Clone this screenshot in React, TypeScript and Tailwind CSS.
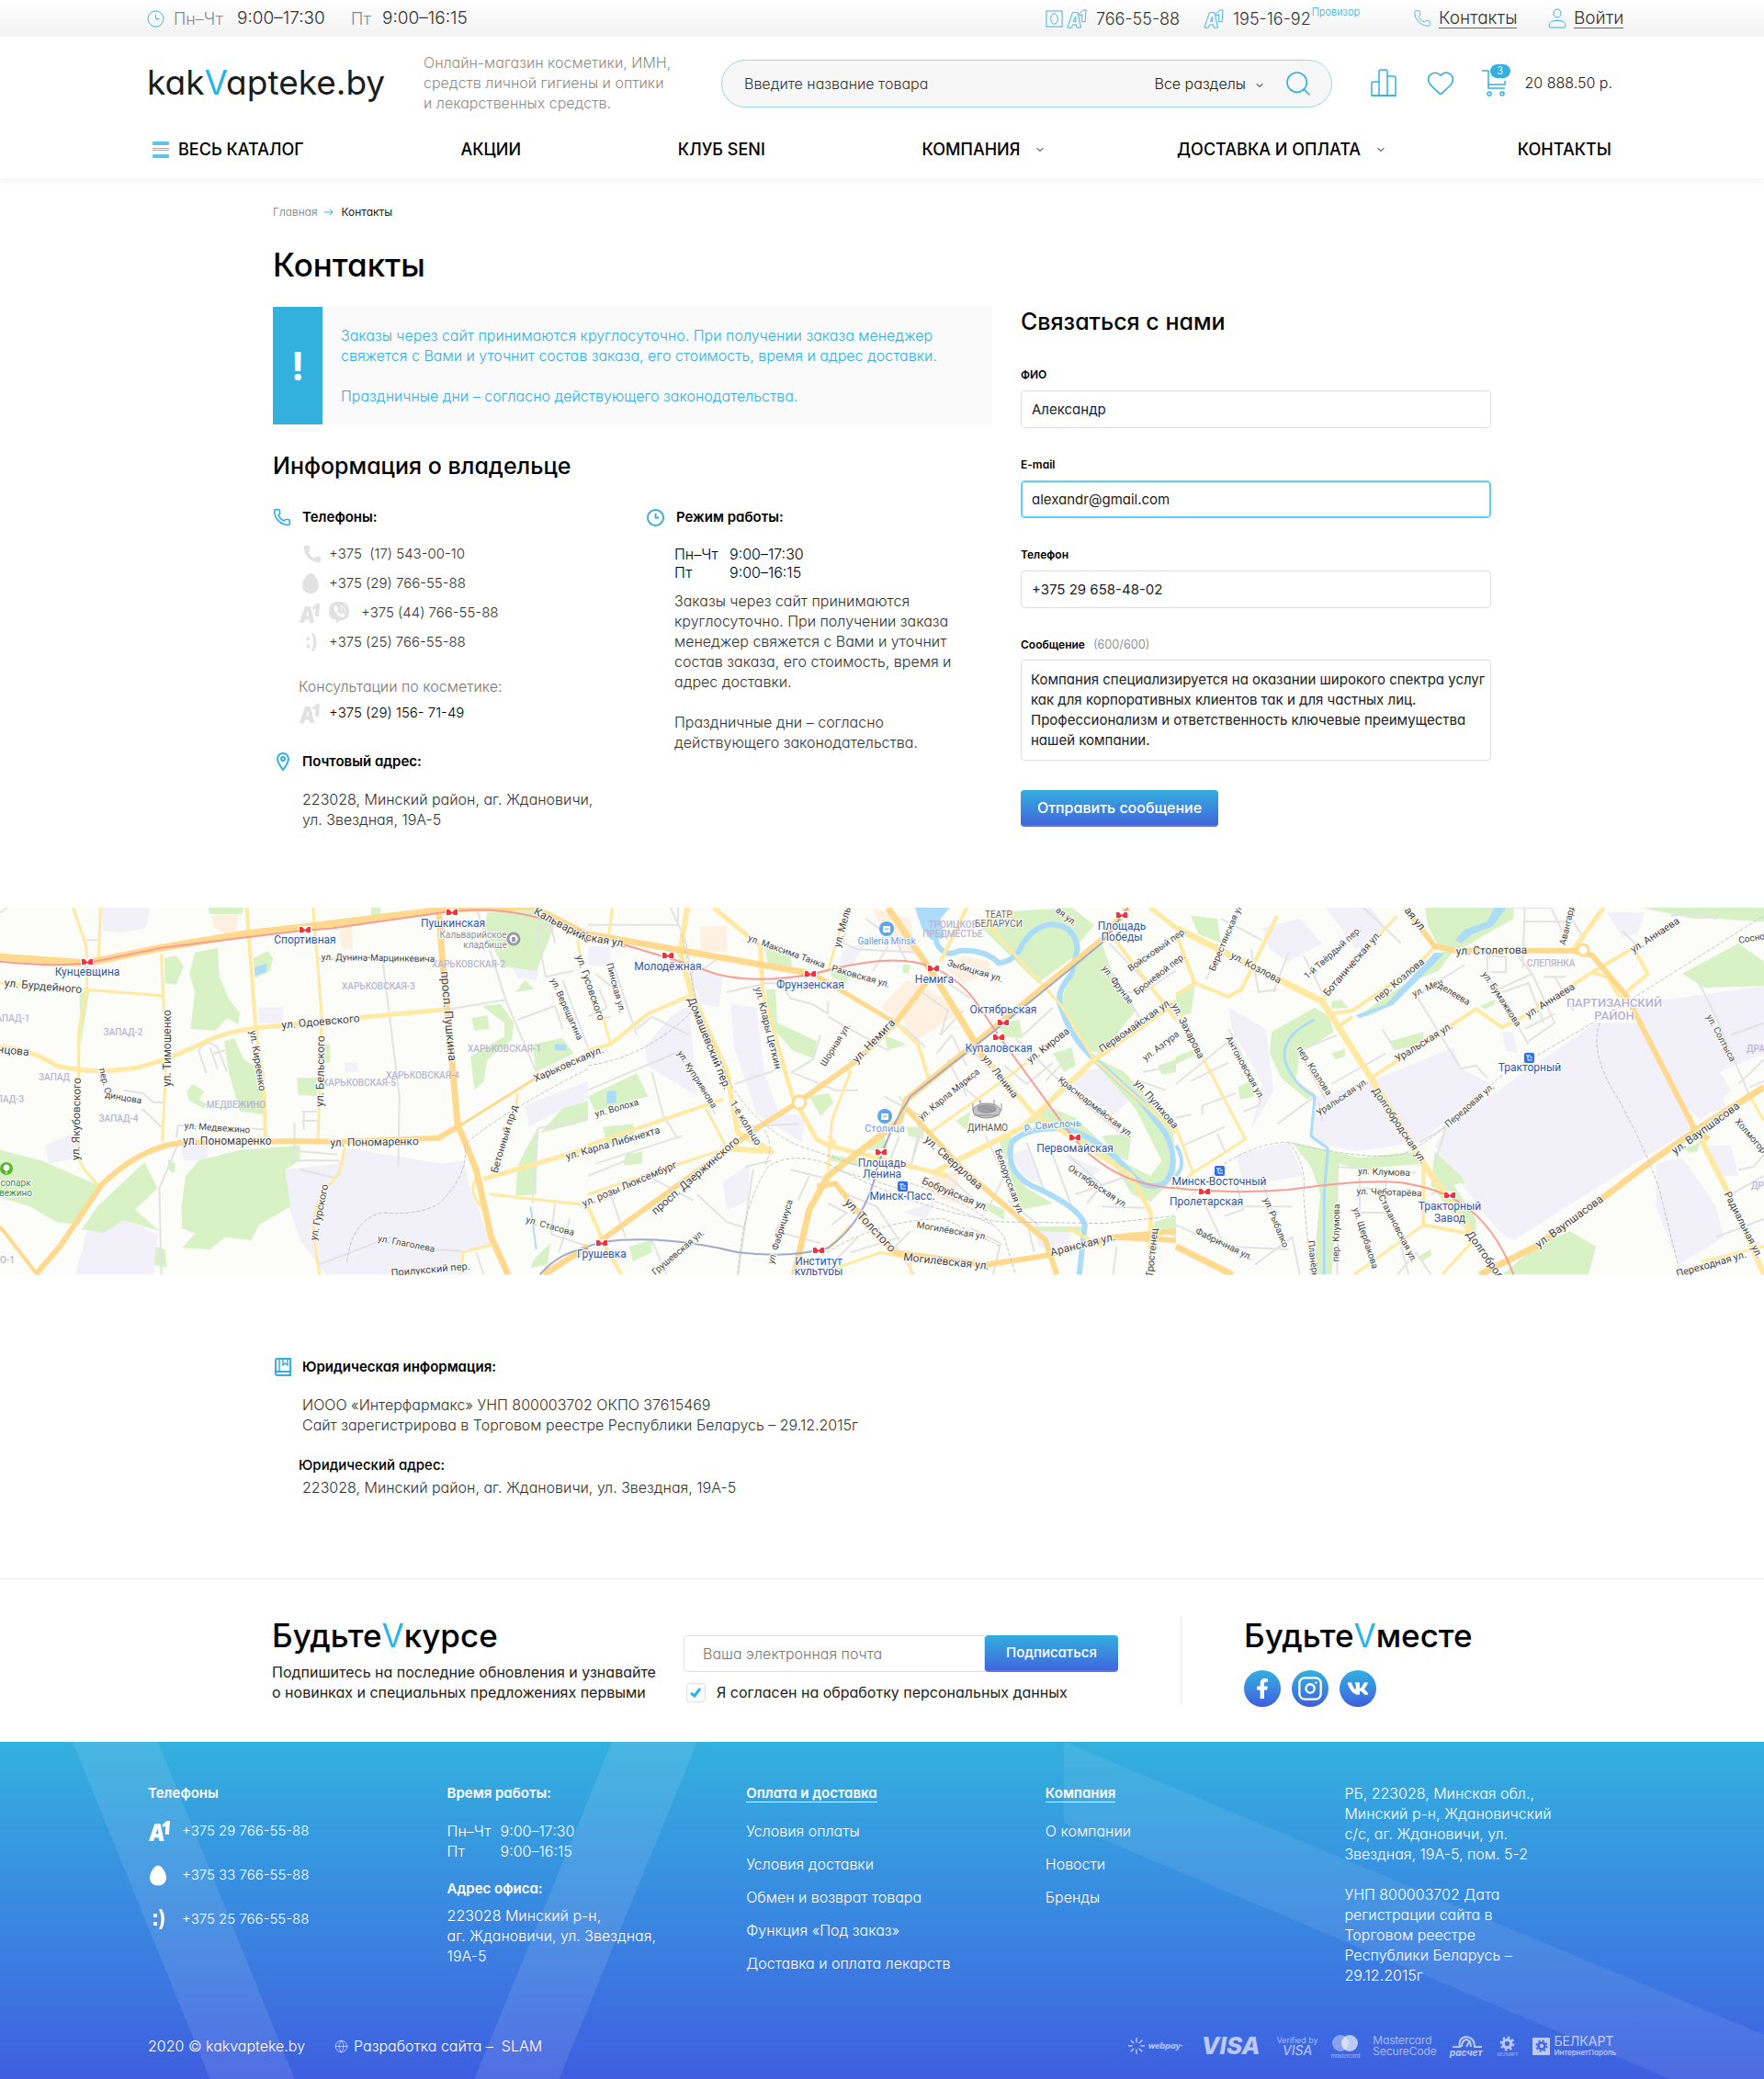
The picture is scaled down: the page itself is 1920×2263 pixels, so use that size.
import type { ReactNode } from 'react'
import { ChevronDown, Globe, Heart, Instagram, Phone, Search } from 'lucide-react'
import { FaFacebookF, FaVk } from 'react-icons/fa'

type Road = [d: string, width: number]
type Street = [x1: number, y1: number, x2: number, y2: number, text: string, size: number]
type Mark = [x: number, y: number, text: string]

type Tile = {
    green: string[]
    works: string[]
    peach: string[]
    lake: string[]
    river: Road[]
    grey: string[]
    yellow: Road[]
    orange: Road[]
    rail: string[]
    red: string[]
    blue: string[]
    streets: Street[]
    districts: Mark[]
    stations: Mark[]
    metro: [number, number][]
    trains: [number, number][]
    malls: [number, number][]
}

// every tile covers 640x400 px, its own grid is 1568x1200 and starts at y = 24
const tiles: Tile[] = [
    {
        green: [
            'M438 190L470 180L490 215L470 275L440 270Z',
            'M520 170L580 155L585 250L610 320L640 370L635 405L605 385L575 425L508 420L520 300L505 240Z',
            'M675 190L715 165L728 190L720 230L680 255Z',
            'M212 300L238 300L215 470Z',
            'M598 460L625 450L650 520L705 560L708 700L640 690L610 560Z',
            'M497 625L515 600L545 625L530 650L552 665L545 680L505 655Z',
            'M792 580L845 580L845 640L795 635Z',
            'M865 470L880 470L880 530L862 530Z',
            'M0 815L110 850L270 935L210 1060L150 1050L80 1000L0 970Z',
            'M385 855L420 940L360 1010L425 1080L330 1045L275 1085L218 1075L260 1000Z',
            'M530 850L640 815L800 800L800 850L760 880L775 1000L690 1060L670 1110L600 1100L560 1140L485 1135L520 1090L485 1070L484 1000L495 900Z',
            'M555 24L650 24L645 45L560 45Z',
            'M1300 40L1425 24L1480 80L1430 230L1340 215L1290 90Z',
            'M1375 300L1400 260L1425 290Z',
            'M1420 470L1500 450L1530 500L1430 560Z',
            'M1258 385L1300 375L1305 420L1265 425Z',
            'M1285 345L1335 338L1370 400L1365 455L1300 520L1290 590L1265 620L1255 510L1345 445L1345 400Z',
            'M1500 680L1568 655L1568 720L1440 760Z',
            'M1400 820L1435 740L1430 960L1375 965L1380 870Z',
            'M415 1130L440 1140L445 1200L412 1190Z',
            'M1425 1170L1468 1120L1460 1190L1415 1200Z',
            'M448 845L468 860L465 890L450 880Z',
            'M990 24L1015 24L1015 58L990 58Z',
        ],
        works: [
            'M270 24L400 24L390 90L330 105L275 100Z',
            'M755 880L900 860L930 810L1180 860L1240 850L1250 930L1310 1120L1230 1150L1250 1222L870 1222L800 1110L770 1000Z',
            'M120 800L200 760L210 840L130 860Z',
            'M1400 670L1568 590L1568 650L1470 700L1410 740Z',
            'M230 1080L330 1040L420 1090L410 1222L200 1222L220 1140Z',
            'M690 350L755 350L755 400L690 400Z',
            'M480 790L560 790L550 850L490 850Z',
            'M920 530L955 530L955 560L920 560Z',
            'M1365 215L1440 205L1430 260L1380 255Z',
        ],
        peach: ['M565 50L635 45L630 130L570 90Z', 'M905 90L940 85L940 160L910 155Z'],
        lake: ['M678 220L712 205L710 235L680 245Z', 'M1480 470L1510 470L1510 490L1480 490Z'],
        river: [['M1415 1000L1430 1140', 2]],
        grey: [
            'M1020 190L1065 640L1062 870', 'M1270 24L1350 330L1430 560', 'M1200 355L1350 325', 'M330 620L380 630L410 660L435 660',
            'M378 680L435 745', 'M470 775L475 735L705 748', 'M785 725L785 850L905 850', 'M800 880L890 905', 'M800 820L900 830',
            'M1430 90L1455 250L1530 230', 'M1500 260L1568 480', 'M1380 390L1480 345L1500 420', 'M550 565L530 490Q550 450 580 480L605 560',
            'M480 780L425 940L430 1222', 'M850 1190L1040 1100L1150 1140L1230 1145', 'M1435 745L1568 710', 'M1435 745L1420 990',
            'M1480 990L1470 1090L1568 1130', 'M1520 1040L1490 1150', 'M0 40L20 24', 'M850 190L1160 190', 'M805 690L845 690M805 720L845 720M810 690L810 750',
            'M1430 90L1470 85L1480 140', 'M1270 1150L1290 1222', 'M230 130L262 130', 'M560 480L580 550', 'M570 500L600 490',
        ],
        yellow: [
            ['M195 24L230 150L232 290L210 420L208 840L225 880L265 935', 3],
            ['M268 24L263 190', 3],
            ['M430 175L443 520L433 790', 3],
            ['M658 24L682 420L705 640L708 780', 4],
            ['M835 24L858 380L848 780', 3],
            ['M0 270L230 292L438 312', 3],
            ['M0 478Q90 490 150 540Q250 570 370 545Q450 520 560 455Q620 420 760 408L1000 378L1200 355', 5],
            ['M920 805L905 890L870 940Q830 1000 838 1110L852 1222', 3],
            ['M1290 910L1568 810', 5],
            ['M1305 960L1568 995', 3],
            ['M1380 630L1375 690L1315 900', 3],
            ['M1230 1222L1235 1150L1310 1125', 3],
            ['M1270 910Q1245 950 1290 1010', 3],
            ['M1540 130L1550 200', 3],
        ],
        orange: [
            ['M0 185L230 205L430 155L640 112L830 85L1090 45L1200 28L1430 18', 8],
            ['M1170 24L1180 200L1205 520L1220 730L1270 880L1310 1100L1355 1222', 7],
            ['M95 1222L160 1130L270 930Q370 810 480 792L780 786L900 788L1170 776L1220 740', 6],
            ['M1220 740L1430 580L1568 500', 3],
            ['M0 1065L95 1215', 4],
            ['M1450 1222L1568 1130', 7],
            ['M1430 24L1568 110', 5],
        ],
        rail: ['M925 1180Q940 1040 1020 1020Q1120 1030 1170 990Q1250 900 1240 800Q1300 720 1568 550'],
        red: ['M0 200Q150 218 233 205L430 155L810 98L880 92L1205 35Q1350 20 1470 70L1568 108'],
        blue: ['M1440 1222Q1490 1150 1568 1135'],
        streets: [
            [25, 270, 207, 290, 'ул. Бурдейного', 12],
            [0, 487, 70, 495, 'нцова', 12],
            [445, 592, 445, 375, 'ул. Тимошенко', 12],
            [675, 430, 700, 618, 'ул. Киреенко', 11],
            [853, 657, 856, 458, 'ул. Бельского', 12],
            [765, 405, 945, 387, 'ул. Одоевского', 12],
            [873, 182, 1143, 190, 'ул. Дунина-Марцинкевича', 10],
            [1187, 240, 1205, 517, 'просп. Пушкина', 13],
            [200, 832, 206, 597, 'ул. Якубовского', 12],
            [275, 555, 290, 625, 'пер. О', 10],
            [290, 632, 370, 650, 'динцова', 10],
            [500, 735, 660, 747, 'ул. Медвежино', 10],
            [490, 787, 723, 785, 'ул. Пономаренко', 12],
            [883, 793, 1115, 787, 'ул. Пономаренко', 12],
            [835, 1103, 865, 932, 'ул. Гурского', 11],
            [1018, 1103, 1150, 1133, 'ул. Глаголева', 10],
            [1052, 1215, 1245, 1195, 'Прилукский пер.', 11],
            [1318, 880, 1370, 678, 'Бетонный пр-д', 11],
            [1430, 580, 1568, 503, 'Харьковская', 11],
            [1480, 262, 1545, 447, 'ул. Верещагина', 10],
            [1430, 35, 1568, 125, 'Кальварийс', 12],
            [1415, 1045, 1520, 1080, 'ул. Стасова', 10],
        ],
        districts: [
            [35, 385, 'АПАД-1'], [328, 428, 'ЗАПАД-2'], [145, 577, 'ЗАПАД'], [28, 649, 'ПАД-3'], [315, 711, 'ЗАПАД-4'],
            [1010, 280, 'ХАРЬКОВСКАЯ-3'], [1250, 206, 'ХАРЬКОВСКАЯ-2'], [1345, 482, 'ХАРЬКОВСКАЯ-1'], [1128, 569, 'ХАРЬКОВСКАЯ-4'],
            [957, 594, 'ХАРЬКОВСКАЯ-5'], [630, 667, 'МЕДВЕЖИНО'], [20, 1173, 'О-1'],
        ],
        stations: [[233, 235, 'Кунцевщина'], [814, 130, 'Спортивная'], [1207, 75, 'Пушкинская']],
        metro: [[233, 201], [814, 96], [1206, 40]],
        trains: [],
        malls: [],
    },
    {
        green: [
            'M470 150L540 180L545 215L480 210Z',
            'M475 290L500 290L505 400L610 460L600 515L545 490L480 400Z',
            'M1050 90L1080 40L1290 24L1350 80L1310 140L1300 180L1200 270Z',
            'M1310 180L1370 140L1400 240L1460 360L1370 500L1330 490L1260 330Z',
            'M1330 500L1430 560L1560 740L1568 900L1500 985L1450 960L1400 860L1330 800L1240 735L1170 725L1220 670L1300 710L1420 850L1500 900L1530 850L1460 680Z',
            'M1095 780L1130 770L1115 850L1170 940L1240 990L1200 1000L1155 1010Z',
            'M0 640L130 565L160 640L20 690Z',
            'M40 740L120 730L130 780L50 800Z',
            'M100 830L145 820L145 860L95 865Z',
            'M590 640L640 630L655 660L620 705Z',
            'M790 440L850 470L800 490Z',
            'M740 800L790 770L800 820L750 815Z',
            'M850 740L895 740L895 780L855 770Z',
            'M650 830L730 850L730 870L645 850Z',
            'M980 720L1020 690L1010 750Z',
            'M1060 985L1110 1010L1110 1045L1065 1010Z',
            'M1190 1065L1330 1065L1310 1085L1200 1080Z',
            'M1510 1050L1568 1030L1568 1100L1510 1080Z',
            'M110 1130L170 1110L170 1150L120 1180Z',
            'M1240 500L1290 480L1300 540L1270 560Z',
            'M1090 400L1150 390L1160 450L1110 445Z',
            'M645 225L700 225L690 270L650 250Z',
            'M840 210L860 210L855 240L838 235Z',
            'M1520 540L1568 520L1568 560L1530 570Z',
            'M1370 770L1450 760L1440 850L1400 830Z',
        ],
        works: [
            'M380 340L450 350L470 560L510 700L580 700L570 790L450 700L390 480Z',
            'M0 150L60 150L60 220L0 210Z',
            'M150 480L220 380L270 340L290 640L160 540Z',
            'M360 920L430 860L430 980L370 1010Z',
            'M1310 560L1400 540L1460 640L1400 700L1290 600Z',
            'M270 210L360 250L350 350L300 340Z',
            'M1270 830L1370 880L1330 910Z',
            'M840 1020L930 980L900 1040Z',
            'M1190 1060L1290 1090L1270 1150L1200 1130Z',
            'M680 160L740 140L700 220L670 210Z',
            'M1130 830L1170 810L1210 930L1160 900Z',
        ],
        peach: [
            'M300 85L370 85L370 170L300 165Z', 'M760 24L860 60L870 180L790 130Z', 'M820 350L880 270L1000 360L870 460Z',
            'M960 230L1000 180L1070 200L1070 240L1000 270Z', 'M910 900L990 880L980 990L910 960Z', 'M780 350L850 260L880 280L820 390Z',
        ],
        lake: ['M872 24L965 24L940 60L950 120L915 130L890 90Z', 'M50 625L75 620L75 660L50 665Z'],
        river: [
            ['M920 90L930 140Q950 190 990 165Q1060 160 1095 205Q1140 200 1160 140Q1200 70 1250 80Q1300 90 1305 160L1290 240Q1240 310 1265 360Q1290 460 1370 540L1470 650L1540 760Q1580 860 1540 920Q1490 960 1440 880Q1350 760 1260 745Q1170 740 1130 790Q1110 880 1180 930Q1310 1000 1325 1060L1310 1222', 6],
        ],
        grey: [
            'M220 24L260 130L290 340', 'M370 300L480 270L600 280', 'M360 180L300 230', 'M500 250L540 320L600 340L640 370L640 330',
            'M640 380L800 490', 'M620 440L600 520L545 560', 'M390 600L500 555', 'M540 560L660 620L720 620', 'M400 740L560 730',
            'M130 420L170 380L270 440', 'M0 620L250 490L340 700', 'M70 220L130 440', 'M20 240L60 280M20 390L60 380', 'M170 560L200 700L240 780',
            'M20 860L250 770', 'M40 980L160 900L280 980', 'M60 960L100 1100', 'M290 960L370 1050L420 1070', 'M440 880L400 1222', 'M540 990L500 1080L620 1120',
            'M420 870L490 850', 'M690 960L770 1000L830 1110', 'M640 990L690 1020L650 1060', 'M860 870L890 750L830 640', 'M790 640L880 700L900 720',
            'M960 520L1010 640', 'M930 500L970 440L1010 540', 'M1000 360L940 440', 'M1020 320L960 270', 'M890 300L960 360L940 440', 'M840 410L900 480',
            'M1140 450L1300 640L1440 780', 'M1160 440L1240 350', 'M1240 530L1170 600L1110 540', 'M1220 590L1290 500', 'M1010 480L1060 530', 'M990 600L1050 660',
            'M830 770L790 900', 'M880 760L860 880', 'M1060 770L1110 900L1070 1000', 'M960 900L1060 1010', 'M1170 790L1220 960', 'M1230 800L1290 1000',
            'M1280 830L1370 930L1330 990', 'M1300 960L1440 900', 'M1370 1000L1500 1005', 'M1480 560L1568 540', 'M1470 590L1540 620',
            'M1400 240L1470 380', 'M1390 140L1568 370', 'M1480 300L1568 230', 'M1440 220L1568 110', 'M1410 300L1480 300', 'M700 24L680 140L720 160L880 170',
            'M740 60L820 130L850 200', 'M800 150L760 230', 'M1250 24L1310 100', 'M30 290L50 350L0 380', 'M860 1080L820 1130L870 1222', 'M720 1100L640 1200',
            'M1020 1070L1100 1120L1080 1222', 'M1400 1222L1410 1130', 'M1200 1060L1120 980', 'M170 1110L210 1222', 'M300 1090L190 1222', 'M100 850L0 900',
            'M540 880L640 910', 'M590 900L560 980', 'M1170 1050L1190 1150', 'M240 24L240 80L0 80', 'M700 1150L830 1100',
        ],
        yellow: [
            ['M265 24L245 170L275 300L370 560L400 760L490 820L360 810', 6],
            ['M335 24L460 150L465 300L545 640L610 780L640 800L960 900', 5],
            ['M600 240L640 230L690 24', 3],
            ['M820 400L880 470L910 590', 4],
            ['M1010 24L940 200', 4],
            ['M1050 60L1260 340L1350 520L1568 760', 3],
            ['M910 760L1060 630L1170 530', 3],
            ['M920 890L1160 740L1350 520L1568 330', 6],
            ['M1050 500L1190 700L1300 780L1450 900L1500 1020L1500 1222', 5],
            ['M640 880L650 720L700 560L690 545', 3],
            ['M275 310L160 370L60 470L0 490', 4],
            ['M360 650L0 800', 4],
            ['M370 810L220 870L0 960', 3],
            ['M315 680L370 810', 3],
            ['M860 1222L860 1170L780 1150L640 1210', 3],
            ['M1400 120L1568 390', 4],
            ['M1500 24L1568 90', 5],
            ['M65 24L55 120', 3],
            ['M40 380L60 470', 3],
            ['M0 1000L50 1140L90 1222', 4],
            ['M640 770L660 790L640 810', 3],
            ['M700 1060L640 1140', 3],
            ['M1280 1070L1370 1130', 4],
            ['M1090 100L1050 60', 3],
        ],
        orange: [
            ['M0 110L600 240', 7],
            ['M600 240L820 400', 5],
            ['M800 24L920 240L1050 500L1070 540', 7],
            ['M920 240L820 400L720 520L560 660L450 745L30 1115', 6],
            ['M1440 24L1370 130L1100 400L850 650L830 720L640 900L590 1010L550 1222', 7],
            ['M850 680L1000 880L1220 1110L1250 1222', 6],
            ['M610 935L660 925L780 1110L820 1150L1060 1190L1220 1160L1400 1100L1568 1080', 6],
            ['M1400 1100L1568 1110', 6],
        ],
        rail: [
            'M250 110L290 340L380 600Q450 740 560 800Q750 880 900 940Q1060 1010 1110 1100L1140 1222',
            'M400 1222Q410 1000 480 870Q540 820 640 860Q870 1010 1100 1050L1380 1055L1568 1030',
            'M600 1180Q760 1040 950 1040L1100 1130',
            'M0 540Q160 510 280 360',
            'M470 750Q500 800 470 870',
            'M660 880Q900 960 1080 1060',
        ],
        red: ['M95 145Q250 200 340 240Q450 275 600 240L650 225Q830 170 920 220Q1000 260 1050 360L1100 450L1290 770Q1400 930 1568 940'],
        blue: ['M1440 24L1370 140L1100 410L860 640Q800 750 770 880Q740 1050 640 1135Q540 1170 400 1150Q200 1090 40 1115L0 1130'],
        streets: [
            [0, 120, 95, 140, 'ская ул.', 12],
            [440, 125, 620, 205, 'ул. Максима Танка', 10],
            [665, 147, 690, 27, 'ул. Мель', 11],
            [660, 222, 797, 270, 'Раковская ул.', 10],
            [970, 205, 1095, 253, 'Зыбицкая ул.', 10],
            [62, 217, 90, 355, 'Пинская ул.', 10],
            [-20, 190, 35, 382, 'ул. Гусовского', 11],
            [282, 340, 365, 595, 'Домашевский пер.', 12],
            [455, 295, 508, 540, 'ул. Клары Цеткин', 11],
            [628, 530, 688, 410, 'Шорная ул.', 10],
            [707, 528, 815, 390, 'ул. Немига', 12],
            [250, 500, 335, 665, 'ул. Куприянова', 10],
            [22, 697, 130, 657, 'ул. Волоха', 10],
            [387, 660, 455, 792, '1-е кольцо', 11],
            [-60, 837, 190, 747, 'ул. Карла Либкнехта', 11],
            [0, 985, 220, 868, 'ул. розы Люксембург', 11],
            [173, 1018, 400, 780, 'просп. Дзержинского', 12],
            [178, 1208, 298, 1085, 'Грушевская ул.', 10],
            [488, 1175, 535, 988, 'ул. Фабрициуса', 10],
            [693, 985, 810, 1140, 'ул. Толстого', 13],
            [845, 1165, 1065, 1193, 'Могилёвская ул.', 12],
            [888, 1058, 1055, 1095, 'Могилёвская ул.', 10],
            [1235, 1148, 1405, 1097, 'Аранская ул.', 12],
            [897, 915, 1063, 1003, 'Бобруйская ул.', 11],
            [900, 775, 1050, 940, 'ул. Свердлова', 12],
            [1098, 825, 1153, 1013, 'Белорусская ул.', 10],
            [1290, 877, 1430, 990, 'Октябрьская ул.', 10],
            [1270, 590, 1440, 757, 'Красноармейская ул.', 10],
            [1060, 512, 1140, 637, 'ул. Ленина', 11],
            [890, 702, 1035, 562, 'ул. Карла Маркса', 10],
            [1173, 522, 1278, 422, 'ул. Кирова', 11],
            [1372, 483, 1545, 332, 'Первомайская ул.', 11],
            [1380, 220, 1448, 330, 'ул. Фрунзе', 10],
            [1443, 223, 1590, 95, 'Войсковый пер.', 10],
            [1455, 303, 1590, 175, 'Броневой пер.', 10],
            [1478, 520, 1575, 430, 'ул. Азгура', 10],
            [1465, 592, 1568, 737, 'ул. Пулихова', 11],
            [1497, 1220, 1510, 1080, 'Тростенец', 11],
            [1250, 24, 1303, 77, 'ая ул.', 10],
            [8, 498, 40, 485, 'ул.', 11],
        ],
        districts: [[972, 77, 'ТРОИЦКОЕ'], [972, 107, 'ПРЕДМЕСТЬЕ']],
        stations: [
            [212, 217, 'Молодёжная'], [593, 277, 'Фрунзенская'], [924, 257, 'Немига'], [1108, 358, 'Октябрьская'], [1096, 482, 'Купаловская'],
            [1424, 83, 'Площадь'], [1424, 119, 'Победы'], [784, 857, 'Площадь'], [784, 893, 'Ленина'], [838, 966, 'Минск-Пасс.'],
            [1299, 811, 'Первомайская'], [37, 1155, 'Грушевка'], [616, 1180, 'Институт'], [616, 1213, 'культуры'],
        ],
        metro: [[212, 181], [593, 241], [922, 221], [1107, 398], [1096, 446], [1424, 47], [782, 821], [1298, 775], [37, 1119], [616, 1143]],
        trains: [[838, 932]],
        malls: [[797, 93], [792, 706]],
    },
    {
        green: [
            'M665 24L900 24L900 60L800 130L760 160L700 150L670 80Z',
            'M1240 24L1568 24L1568 70L1440 60L1380 60Z',
            'M1350 240L1500 140L1568 200L1568 280L1410 285Z',
            'M700 170L740 165L700 230L620 270L580 340L520 375L480 385L540 330L640 250Z',
            'M255 430L370 350L410 380L420 430L330 500L320 590L370 630L350 650L280 580L250 500Z',
            'M0 300L50 280L40 370L0 380Z',
            'M570 460L660 430L660 470L580 490Z',
            'M415 500L450 485L450 510L425 520Z',
            'M165 610L205 585L210 640L170 650Z',
            'M310 790L490 840L650 820L660 860L560 870L495 880L435 860L415 1222L365 1222L385 960L360 870Z',
            'M690 820L760 900L770 920L740 930L800 1040L800 1090L760 1060L680 930Z',
            'M870 1222L960 1130L1050 1080L1120 1130L1100 1222Z',
            'M1355 810L1400 790L1390 820L1370 825Z',
            'M40 50L110 60L120 140L60 110Z',
            'M810 345L850 325L850 340L825 355Z',
            'M650 1160L680 1140L680 1160L655 1180Z',
            'M415 330L440 325L460 350L415 355Z',
            'M0 510L60 480L60 500L0 535Z',
        ],
        works: [
            'M520 590L740 480L760 550L840 600L650 790L480 820L360 790L370 640L410 630Z',
            'M1120 400L1240 400L1380 740L900 1110L860 1080L730 880L690 800L730 730L930 560Z',
            'M1220 340L1568 280L1568 500L1450 560L1480 620L1400 720L1340 650Z',
            'M1280 860L1350 840L1440 1000L1460 1100L1340 1190L1280 1000Z',
            'M140 350L240 420L260 620L200 750L230 600L150 420Z',
            'M230 90L330 60L390 140L300 200L250 160Z',
            'M160 830L300 790L340 900L180 930Z',
            'M1150 40L1250 40L1230 110L1190 120Z',
            'M400 24L520 24L560 90L480 160Z',
            'M1400 800L1480 800L1500 900L1440 900Z',
            'M1360 600L1440 590L1470 680L1400 700Z',
            'M870 430L900 430L910 500L880 490Z',
        ],
        peach: [],
        lake: ['M850 24L880 24L845 85L790 110L760 140L745 130L770 95L830 70Z', 'M690 170L715 175L580 340L490 385L480 375L560 340Z'],
        river: [['M370 390Q280 440 290 520Q310 600 370 640L360 770L405 810L395 960L395 1222', 3], ['M0 800Q30 860 0 900', 4]],
        grey: [
            'M120 60L230 130', 'M170 24L80 260', 'M340 180L390 300', 'M300 170L260 300', 'M200 160L220 300L270 290', 'M770 210L640 310L760 550L800 540L830 580',
            'M930 24L925 220', 'M830 180L830 240L940 470', 'M830 180L880 185L880 235L840 235', 'M930 70L1060 70L1090 130', 'M820 24L1000 24L1030 100',
            'M910 180L950 240L860 290', 'M950 240L1010 400L940 460', 'M1010 250L1060 360', 'M870 300L940 270L980 400', 'M930 420L1010 370', 'M980 250L1040 250',
            'M1190 100L1240 160', 'M1390 260L1440 380L1530 640', 'M1480 440L1568 400', 'M1500 600L1568 520', 'M1530 610L1568 590', 'M1500 700L1568 830L1540 870L1500 880',
            'M500 24L600 140', 'M550 420L580 480', 'M330 500L400 650', 'M415 600L560 500', 'M350 480L430 440', 'M140 420L230 640L220 670L180 690',
            'M0 600L160 440', 'M40 590L140 530', 'M70 700L70 670L160 630', 'M20 800L130 740', 'M0 710L40 700', 'M110 760L130 820', 'M270 730L370 640',
            'M430 870L640 890', 'M430 880L430 1222', 'M490 870L490 1020', 'M560 900L560 1000L620 1160', 'M490 940L640 950', 'M650 790L720 740L690 860',
            'M80 1000L130 1130L300 1140', 'M130 1000L310 1000', 'M160 920L180 1010L130 1030', 'M0 1060L200 1170', 'M230 920L280 1100', 'M210 1190L310 1100L330 1222',
            'M590 1222L640 1150L680 1222', 'M600 1130L620 1222', 'M480 1020L560 1020', 'M740 930L680 960', 'M1440 1100L1568 1040', 'M1390 1190L1340 1222',
            'M1480 960L1568 900', 'M390 720L380 660', 'M1440 60L1380 40L1320 50',
        ],
        yellow: [
            ['M0 90L390 330L520 580L660 860L790 1090', 7],
            ['M0 110L50 270L140 315L175 290L270 50', 4],
            ['M50 270L0 310', 4],
            ['M0 340L70 510L185 780L45 890L0 740', 3],
            ['M390 330L400 300L590 50', 3],
            ['M690 150L640 220L470 360L415 370L430 415L470 380', 4],
            ['M520 580L800 355L870 415L940 370L1110 235L1220 155L1258 240L1200 300', 4],
            ['M1060 160L1140 24', 5],
            ['M660 870L660 1060L790 1090', 4],
            ['M660 1060L475 1222', 3],
            ['M790 1115L710 1222', 3],
            ['M1400 780L1470 950L1568 1222', 6],
            ['M1530 640L1568 720', 3],
            ['M1400 1180L1568 1130', 3],
            ['M0 940L45 890', 3],
            ['M1110 235L1150 250L1180 310L1210 330', 4],
        ],
        orange: [
            ['M610 24L690 150L740 163L1060 165L1110 180L1200 310L1380 740L1420 780', 6],
            ['M810 1222L960 1130L1140 970L1270 850L1400 740L1568 610', 7],
            ['M0 1130L150 1222', 7],
            ['M1370 700L1380 770', 4],
        ],
        rail: [
            'M0 1010L130 860Q220 790 300 790Q500 850 600 830Q680 800 860 580L1140 380L1568 50',
            'M1130 400Q1100 500 1180 650Q1260 830 1290 950L1345 1222',
            'M300 790Q350 860 340 960L360 1222',
        ],
        red: ['M0 940Q150 960 300 945Q500 910 600 922Q700 940 760 990Q850 1060 900 1222'],
        blue: [],
        streets: [
            [100, 207, 163, 27, 'Берестянская ул.', 10],
            [155, 180, 275, 257, 'ул. Козлова', 11],
            [352, 240, 480, 100, '1-й Твёрдый пер.', 10],
            [403, 300, 537, 112, 'Ботаническая ул.', 11],
            [535, 320, 653, 198, 'пер. Козлова', 11],
            [617, 30, 662, 97, 'ая ул.', 12],
            [748, 165, 937, 162, 'ул. Столетова', 12],
            [635, 302, 705, 265, 'ул. Мен', 10],
            [705, 275, 778, 330, 'делеева', 10],
            [828, 243, 912, 400, 'ул. Бумажкова', 10],
            [937, 373, 1058, 280, 'ул. Аннаева', 11],
            [1223, 155, 1330, 70, 'ул. Аннаева', 11],
            [1032, 132, 1052, 27, 'Авангард', 10],
            [1503, 128, 1568, 115, 'Сосно', 10],
            [590, 517, 730, 407, 'Уральская ул.', 11],
            [382, 690, 502, 592, 'Уральская ул.', 10],
            [535, 622, 660, 848, 'Долгобродская ул.', 11],
            [722, 728, 840, 605, 'Передовая ул.', 10],
            [332, 487, 407, 625, 'пер. Козлова', 10],
            [148, 458, 225, 632, 'Антоновская ул.', 10],
            [0, 345, 65, 508, 'ул. Захарова', 11],
            [1427, 380, 1485, 515, 'ул. Солтыса', 10],
            [1325, 822, 1500, 665, 'ул. Ваупшасова', 12],
            [960, 1128, 1138, 970, 'ул. Ваупшасова', 12],
            [493, 882, 618, 888, 'ул. Клумова', 10],
            [490, 948, 648, 955, 'ул. Чеботарёва', 10],
            [555, 982, 630, 1162, 'Стахановская ул.', 10],
            [485, 1017, 530, 1187, 'ул. Щербакова', 10],
            [425, 1170, 427, 1003, 'пер. Клумова', 10],
            [245, 980, 292, 1122, 'ул. Рыбалко', 10],
            [362, 1122, 372, 1220, 'Планёрн', 10],
            [62, 1080, 195, 1160, 'Фабричная ул.', 10],
            [790, 1095, 860, 1222, 'Долгоброд', 12],
            [1475, 962, 1553, 1155, 'Радиальная ул.', 11],
            [1345, 1215, 1510, 1158, 'Переходная ул.', 11],
            [1505, 725, 1563, 810, 'Холмогор', 10],
        ],
        districts: [[1000, 204, 'СЛЕПЯНКА'], [1545, 484, 'ДРА'], [1550, 930, 'ДР']],
        stations: [
            [943, 547, 'Тракторный'], [114, 917, 'Минск-Восточный'], [80, 984, 'Пролетарская'], [730, 1000, 'Тракторный'], [730, 1037, 'Завод'],
        ],
        metro: [[76, 950], [731, 964]],
        trains: [[942, 514], [114, 882]],
        malls: [],
    },
]

const toX = (tile: number, x: number) => Math.round(tile * 640 + x / 2.45)
const toY = (y: number) => Math.round(y / 3 - 8)

const Lines = ({ items, stroke }: { items: Road[]; stroke: string }) => (
    <>
        {items.map(([d, width]) => (
            <path key={d} d={d} stroke={stroke} strokeWidth={width} fill="none" strokeLinejoin="round" vectorEffect="non-scaling-stroke" />
        ))}
    </>
)

const CityMap = () => (
    <svg viewBox="0 0 1920 400" preserveAspectRatio="xMidYMid slice" className="block h-[400px] w-full bg-[#fcfdf8] font-['Roboto',sans-serif]" role="img" aria-label="Карта">
        {tiles.map((t, i) => (
            <g key={i} transform={`translate(${i * 640} -8) scale(0.40816 0.33333)`}>
                {t.works.map((d) => <path key={d} d={d} fill="#f2f1f9" />)}
                {t.peach.map((d) => <path key={d} d={d} fill="#fff0e2" />)}
                {t.green.map((d) => <path key={d} d={d} fill="#d8f1c5" />)}
                <Lines items={t.grey.map((d) => [d, 2])} stroke="#e3e3e5" />
                {t.lake.map((d) => <path key={d} d={d} fill="#acdcf8" />)}
                <Lines items={t.river} stroke="#acdcf8" />
                <Lines items={t.yellow} stroke="#ffe9a3" />
                <Lines items={t.orange} stroke="#ffd98e" />
                {t.rail.map((d) => (
                    <path key={d} d={d} stroke="#c4c4c8" strokeWidth={1} strokeDasharray="4 2" fill="none" vectorEffect="non-scaling-stroke" />
                ))}
                <Lines items={t.red.map((d) => [d, 2])} stroke="#fa9c96" />
                <Lines items={t.blue.map((d) => [d, 2])} stroke="#a3a9c8" />
            </g>
        ))}
        <circle cx="870" cy="212" r="7" fill="#fff" stroke="#ffd98e" strokeWidth="3" />
        <circle cx="1723" cy="46" r="6" fill="#fff" stroke="#ffd98e" strokeWidth="3" />
        {tiles.map((t, i) => (
            <g key={i} textAnchor="middle">
                {t.districts.map(([x, y, text]) => (
                    <text key={text + x} x={toX(i, x)} y={toY(y) + 4} fontSize="10" fontWeight="500" fill="#b9b6d3">{text}</text>
                ))}
                {t.streets.map(([x1, y1, x2, y2, text, size]) => {
                    const [ax, ay, bx, by] = [toX(i, x1), toY(y1), toX(i, x2), toY(y2)]
                    const angle = Math.round((Math.atan2(by - ay, bx - ax) * 180) / Math.PI)
                    return (
                        <text key={text + x1} transform={`translate(${(ax + bx) / 2} ${(ay + by) / 2}) rotate(${angle})`} dy="4" fontSize={size} fill="#444" stroke="#fff" strokeWidth="2" paintOrder="stroke">
                            {text}
                        </text>
                    )
                })}
                {t.stations.map(([x, y, text]) => (
                    <text key={text + x} x={toX(i, x)} y={toY(y) + 4} fontSize="12" fill="#2f55ae" stroke="#fff" strokeWidth="2" paintOrder="stroke">{text}</text>
                ))}
                {t.metro.map(([x, y]) => (
                    <g key={x} transform={`translate(${toX(i, x)} ${toY(y)})`}>
                        <rect x="-7" y="-4" width="14" height="8" rx="1" fill="#fff" />
                        <path d="M-6 3V-3H-3L0 0L3 -3H6V3H2L0 1L-2 3Z" fill="#f0333f" />
                    </g>
                ))}
                {t.trains.map(([x, y]) => (
                    <g key={x} transform={`translate(${toX(i, x)} ${toY(y)})`}>
                        <rect x="-5" y="-5" width="11" height="11" rx="2" fill="#2f6fe4" />
                        <path d="M-3 -2H2M-1 -2V3H4M1 0H4" stroke="#fff" fill="none" />
                    </g>
                ))}
                {t.malls.map(([x, y]) => (
                    <g key={x} transform={`translate(${toX(i, x)} ${toY(y)})`}>
                        <circle r="8" fill="#58a8f0" />
                        <path d="M-4 -3H4V4H-4Z" fill="#fff" />
                        <path d="M-2 -1Q0 3 2 -1" stroke="#58a8f0" fill="none" />
                    </g>
                ))}
            </g>
        ))}
        <g textAnchor="middle" stroke="#fff" strokeWidth="2" paintOrder="stroke">
            <text x="1757" y="108" fontSize="13" fontWeight="500" fill="#b4b1d3">ПАРТИЗАНСКИЙ</text>
            <text x="1757" y="122" fontSize="13" fontWeight="500" fill="#b4b1d3">РАЙОН</text>
            <text x="965" y="40" fontSize="10" fill="#5aa0ea">Galleria Minsk</text>
            <text x="963" y="244" fontSize="11" fill="#5aa0ea">Столица</text>
            <text transform="translate(1146 240) rotate(-4)" fontSize="11" fill="#4b96d6">р. Свислочь</text>
            <text x="1075" y="243" fontSize="10" fill="#555">ДИНАМО</text>
            <text x="1087" y="11" fontSize="10" fill="#666">ТЕАТР</text>
            <text x="1087" y="21" fontSize="10" fill="#666">БЕЛАРУСИ</text>
            <text x="515" y="33" fontSize="10" fill="#8c8c96">Кальварийское</text>
            <text x="528" y="44" fontSize="10" fill="#8c8c96">кладбище</text>
            <text x="17" y="303" fontSize="10" fill="#3f8a3a">сопарк</text>
            <text x="17" y="314" fontSize="10" fill="#3f8a3a">вежино</text>
        </g>
        <circle cx="559" cy="34" r="6" fill="#fff" stroke="#9a9aa4" strokeWidth="3" />
        <path d="M557 32h4v5h-4z" fill="#9a9aa4" />
        <circle cx="7" cy="284" r="7" fill="#5cb531" />
        <path d="M7 280a3 3 0 1 1 0 6a3 3 0 1 1 0 -6M7 285V290" fill="#fff" stroke="#fff" />
        <g stroke="#8e8e92" fill="#c6c6c9">
            <path d="M1059 221v-8M1090 221v-8M1067 214v-5M1082 214v-5" />
            <ellipse cx="1074" cy="221" rx="15" ry="8" />
            <ellipse cx="1074" cy="219" rx="10" ry="4" fill="#a2a2a6" />
            <path d="M1060 226L1088 226M1064 216L1084 222" fill="none" />
        </g>
    </svg>
)

const ClockIcon = ({ className }: { className?: string }) => (
    <svg viewBox="0 0 20 20" className={className} fill="none" stroke="currentColor">
        <circle cx="10" cy="10" r="9" />
        <path d="M10 5v5h4" />
    </svg>
)

const A1Icon = ({ className, outline }: { className?: string; outline?: boolean }) => (
    <svg viewBox="0 0 24 23" className={className} fill={outline ? 'none' : 'currentColor'} stroke={outline ? 'currentColor' : 'none'} aria-hidden="true">
        <path d="M1 22L7 4H13L17 22H12L11.500 18.500H7L6 22ZM8 14.500H11L10.500 9Z" />
        <path d="M15 5L20 1H23L22 15H18L18.500 6L15.500 8Z" />
    </svg>
)

const EggIcon = ({ className }: { className?: string }) => (
    <svg viewBox="0 0 18 22" className={className} fill="currentColor">
        <path d="M9 0C13 0 18 8 18 13.500C18 18.500 14 22 9 22S0 18.500 0 13.500C0 8 5 0 9 0Z" />
    </svg>
)

const SmileIcon = ({ className }: { className?: string }) => (
    <svg viewBox="0 0 12 22" className={className} fill="currentColor">
        <rect x="0" y="5" width="4" height="4" />
        <rect x="0" y="14" width="4" height="4" />
        <path d="M6 0H9Q15 11 9 22H6Q11 11 6 0Z" />
    </svg>
)

const ViberIcon = ({ className }: { className?: string }) => (
    <svg viewBox="0 0 22 24" className={className} fill="currentColor">
        <path d="M11 0C19 0 22 3 22 10.500S19 20 12 20.500L8 24V20C2 19 0 16.500 0 10.500C0 3 3 0 11 0Z" />
        <path d="M6 5Q8 3.500 9 5.500L10 8L8.500 9.500Q9.500 12.500 12.500 13.500L14 12L16.500 13.500Q18 14.500 16 16.500Q14 18 10 14.500Q4 9 6 5Z" fill="#fff" />
        <path d="M12 4.500Q17.500 5 17.500 11M12 7.500Q14.500 8 14.500 10.500" fill="none" stroke="#fff" />
    </svg>
)

const SubTitle = ({ icon, children }: { icon: ReactNode; children: ReactNode }) => (
    <h3 className="flex items-center text-[15px] leading-[22px] font-semibold text-black">
        <span className="flex w-8 text-[#33b0de]">{icon}</span>
        {children}
    </h3>
)

const nav = [
    { title: 'ВЕСЬ КАТАЛОГ', burger: true },
    { title: 'АКЦИИ' },
    { title: 'КЛУБ SENI' },
    { title: 'КОМПАНИЯ', more: true },
    { title: 'ДОСТАВКА И ОПЛАТА', more: true },
    { title: 'КОНТАКТЫ' },
]

const Header = () => (
    <header className="shadow-[0_2px_8px_rgba(0,0,0,0.06)]">
        <div className="bg-linear-to-b from-white to-[#f2f2f2]">
            <div className="mx-auto flex h-10 max-w-[1620px] items-center pl-2.5 text-[18px] font-light text-[#333]">
                <ClockIcon className="mr-2.5 size-[19px] text-[#33b0de]" />
                <span className="w-[69px] text-[#888]">Пн–Чт</span>
                <span className="w-[124px] text-[19px]">9:00–17:30</span>
                <span className="w-[34px] text-[#888]">Пт</span>
                <span className="text-[19px]">9:00–16:15</span>
                <div className="ml-auto flex items-center">
                    <svg viewBox="0 0 20 20" className="mr-1 size-[19px] text-[#33b0de]" fill="none" stroke="currentColor">
                        <rect x="1" y="1" width="18" height="18" />
                        <ellipse cx="10" cy="10" rx="4" ry="6" />
                    </svg>
                    <A1Icon outline className="mr-2.5 h-[21px] w-[22px] text-[#33b0de]" />
                    <span className="w-[117px]">766-55-88</span>
                    <A1Icon outline className="mr-2.5 h-[21px] w-[22px] text-[#33b0de]" />
                    <span className="flex w-[196px]">
                        195-16-92
                        <span className="ml-px text-[11px] leading-3 text-[#33b0de]">Провизор</span>
                    </span>
                    <Phone strokeWidth={1} className="mr-2 size-5 text-[#33b0de]" />
                    <span className="w-[119px] text-[19px]"><a href="#" className="inline-block border-b border-[#666] leading-5">Контакты</a></span>
                    <svg viewBox="0 0 20 22" className="mr-2 h-[22px] w-5 text-[#33b0de]" fill="none" stroke="currentColor">
                        <ellipse cx="10" cy="5.500" rx="4" ry="4.500" />
                        <path d="M1 19C1 15 4 13.500 10 13.500S19 15 19 19Q19 21 17 21H3Q1 21 1 19Z" />
                    </svg>
                    <span className="w-[57px] text-[19px]"><a href="#" className="inline-block border-b border-[#666] leading-5">Войти</a></span>
                </div>
            </div>
        </div>

        <div className="mx-auto flex h-[100px] max-w-[1600px] items-center pr-[5px]">
            <a href="#" className="w-[301px] text-[37px] text-[#1c1c1c]">
                kak<span className="text-[#28b4e8]">V</span>apteke.by
            </a>
            <p className="w-[324px] text-[16px] leading-[22px] font-light text-[#8c8c8c]">
                Онлайн-магазин косметики, ИМН,<br />средств личной гигиены и оптики<br />и лекарственных средств.
            </p>
            <form className="mt-0.5 flex h-[52px] flex-1 items-center rounded-full border border-[#9cd9e6] bg-[#f7f7f7] px-6 text-[16px] font-light">
                <input aria-label="Поиск" placeholder="Введите название товара" className="min-w-0 flex-1 bg-transparent outline-none placeholder:text-[#333]" />
                <div className="relative mr-5">
                    <select aria-label="Раздел" className="appearance-none bg-transparent pr-5 text-[#222]">
                        <option>Все разделы</option>
                    </select>
                    <ChevronDown strokeWidth={2} className="pointer-events-none absolute top-2 right-0 size-3" />
                </div>
                <button type="button" aria-label="Найти" className="-mr-1 text-[#33b0de]">
                    <Search strokeWidth={1.25} className="size-8" />
                </button>
            </form>
            <a href="#" aria-label="Сравнение" className="ml-[42px] text-[#33b0de]">
                <svg viewBox="0 0 28 30" className="h-[30px] w-7" fill="none" stroke="currentColor" strokeWidth="1.500">
                    <path d="M1 29V16Q1 14 3 14H9V29ZM9 29V3Q9 1 11 1H16Q18 1 18 3V29ZM18 29V8H25Q27 8 27 10V29Z" />
                    <path d="M1 29H27" />
                </svg>
            </a>
            <a href="#" aria-label="Избранное" className="ml-8 text-[#33b0de]">
                <Heart strokeWidth={1.25} className="size-8" />
            </a>
            <a href="#" className="relative ml-7 flex items-center text-[16px] font-light text-[#222]">
                <svg viewBox="0 0 32 32" className="mr-4 size-8 text-[#33b0de]" fill="none" stroke="currentColor" strokeWidth="1.500">
                    <path d="M1 3H8V22H26M8 18H26V14" />
                    <circle cx="9" cy="28" r="2" />
                    <circle cx="23" cy="28" r="2" />
                </svg>
                <span className="absolute -top-1 left-2.5 flex h-[15px] w-[22px] items-center justify-center rounded-full bg-[#33b0de] text-[11px] leading-none text-white">3</span>
                20 888.50 р.
            </a>
        </div>

        <nav className="mx-auto flex h-[54px] max-w-[1600px] justify-between px-[6px] pt-[9px] text-[18px] leading-7 font-medium text-black">
            {nav.map((item) => (
                <a key={item.title} href="#" className="relative flex items-center self-start">
                    {item.burger && (
                        <svg viewBox="0 0 18 18" className="mr-2.5 size-[18px] text-[#5cc3e8]" fill="currentColor">
                            <rect y="0" width="18" height="4" rx="1" />
                            <rect y="7" width="18" height="1" />
                            <rect y="9" width="18" height="1" />
                            <rect y="14" width="18" height="4" rx="1" />
                        </svg>
                    )}
                    {item.title}
                    {item.more && <ChevronDown className="absolute top-2 left-full ml-4 size-3" />}
                </a>
            ))}
        </nav>
    </header>
)

const inputStyle = 'mt-[9px] h-[41px] rounded border px-[11px] text-[15px] font-normal text-[#222] outline-none'

const ContactForm = () => (
    <form className="flex w-[512px] flex-col">
        <h2 className="text-[25px] leading-8 font-medium text-black">Связаться с нами</h2>
        <label className="mt-[34px] flex flex-col text-[12px] leading-4 font-semibold text-black">
            ФИО
            <input defaultValue="Александр" className={`${inputStyle} border-[#dedede]`} />
        </label>
        <label className="mt-8 flex flex-col text-[12px] leading-4 font-semibold text-black">
            E-mail
            <input type="email" defaultValue="alexandr@gmail.com" className={`${inputStyle} border-[#5bd0f7] ring-1 ring-[#5bd0f7] ring-inset`} />
        </label>
        <label className="mt-8 flex flex-col text-[12px] leading-4 font-semibold text-black">
            Телефон
            <input type="tel" defaultValue="+375 29 658-48-02" className={`${inputStyle} border-[#dedede]`} />
        </label>
        <label htmlFor="message" className="mt-[31px] text-[12px] leading-4 font-semibold text-black">
            Сообщение <span className="ml-1.5 text-[13px] font-light text-[#777]">(600/600)</span>
        </label>
        <textarea
            id="message"
            className="mt-2 h-[110px] resize-none overflow-hidden rounded border border-[#dedede] py-[10px] pr-0 pl-[10px] text-[15px] leading-[22px] text-[#222] outline-none"
            defaultValue={'Компания специализируется на оказании широкого спектра услуг\nкак для корпоративных клиентов так и для частных лиц.\nПрофессионализм и ответственность ключевые преимущества\nнашей компании.'}
        />
        <button type="button" className="mt-8 h-10 w-[215px] self-start rounded border-b-2 border-[#5c74e6] bg-linear-to-b from-[#33addd] to-[#4066dd] text-[16px] font-medium text-white">
            Отправить сообщение
        </button>
    </form>
)

const Owner = () => (
    <div className="mt-[29px] flex text-[16px] leading-[22px] font-light text-[#333]">
        <div className="w-[407px]">
            <SubTitle icon={<Phone strokeWidth={2} className="size-5" />}>Телефоны:</SubTitle>
            <ul className="mt-[13px] ml-8 text-[15px] text-[#333]">
                <li className="flex h-8 items-center"><span className="w-[29px]"><Phone className="size-[22px] fill-current stroke-0 text-[#e2e2e2]" /></span>+375&nbsp; (17) 543-00-10</li>
                <li className="flex h-8 items-center"><span className="w-[29px]"><EggIcon className="h-[22px] w-[18px] text-[#e2e2e2]" /></span>+375 (29) 766-55-88</li>
                <li className="flex h-8 items-center">
                    <span className="w-[29px]"><A1Icon className="-ml-1 h-[23px] w-6 text-[#e2e2e2]" /></span>
                    <span className="w-[35px]"><ViberIcon className="h-6 w-[22px] text-[#e2e2e2]" /></span>
                    +375 (44) 766-55-88
                </li>
                <li className="flex h-8 items-center"><span className="w-[29px]"><SmileIcon className="ml-1 h-5 w-3 text-[#e2e2e2]" /></span>+375 (25) 766-55-88</li>
            </ul>
            <p className="mt-[21px] ml-7 text-[#777]">Консультации по косметике:</p>
            <p className="mt-1 mb-7 ml-8 flex h-7 items-center text-[15px] text-black">
                <span className="w-[29px]"><A1Icon className="-ml-1 h-[23px] w-6 text-[#e2e2e2]" /></span>+375 (29) 156- 71-49
            </p>
            <SubTitle
                icon={
                    <svg viewBox="0 0 14 20" className="ml-1 h-5 w-3.5" fill="none" stroke="currentColor" strokeWidth="2">
                        <path d="M7 19Q1 11 1 7A6 6 0 0 1 13 7Q13 11 7 19Z" />
                        <circle cx="7" cy="7" r="2" />
                    </svg>
                }
            >
                Почтовый адрес:
            </SubTitle>
            <p className="mt-[19px] ml-8">223028, Минский район, аг. Ждановичи,<br />ул. Звездная, 19А-5</p>
        </div>
        <div>
            <SubTitle icon={<ClockIcon className="size-[19px] stroke-2" />}>Режим работы:</SubTitle>
            <dl className="mt-[19px] ml-[30px] grid grid-cols-[60px_1fr] leading-5 text-black">
                <dt>Пн–Чт</dt>
                <dd>9:00–17:30</dd>
                <dt>Пт</dt>
                <dd>9:00–16:15</dd>
            </dl>
            <p className="mt-2.5 ml-[30px]">
                Заказы через сайт принимаются<br />круглосуточно. При получении заказа<br />менеджер свяжется с Вами и уточнит<br />состав заказа, его стоимость, время и<br />адрес доставки.
                <br /><br />
                Праздничные дни – согласно<br />действующего законодательства.
            </p>
        </div>
    </div>
)

const Subscribe = () => (
    <section className="border-t border-[#ececec] pt-[41px] pb-[38px]">
        <div className="mx-auto flex max-w-[1328px] items-start text-[16px] leading-[22px] text-[#222]">
            <div className="w-[448px]">
                <h2 className="text-[35px] leading-10 font-medium text-black">Будьте<span className="font-normal text-[#28b4e8]">V</span>курсе</h2>
                <p className="mt-[9px]">Подпишитесь на последние обновления и узнавайте<br />о новинках и специальных предложениях первыми</p>
            </div>
            <form className="mt-5 w-[473px]">
                <div className="flex">
                    <input type="email" aria-label="Ваша электронная почта" placeholder="Ваша электронная почта" className="h-10 min-w-0 flex-1 rounded-l border border-[#dedede] px-5 font-light outline-none placeholder:text-[#777]" />
                    <button type="button" className="h-10 w-[145px] rounded border-b-2 border-[#5c74e6] bg-linear-to-b from-[#33addd] to-[#4066dd] text-[15px] font-medium text-white">
                        Подписаться
                    </button>
                </div>
                <label className="mt-[11px] flex items-center">
                    <span className="relative mr-3 ml-[3px] size-[21px]">
                        <input type="checkbox" defaultChecked className="peer block size-full appearance-none rounded border border-[#dedede]" />
                        <svg viewBox="0 0 21 21" className="pointer-events-none absolute inset-0 hidden text-[#28b4e8] peer-checked:block" fill="none" stroke="currentColor" strokeWidth="3">
                            <path d="M5 11L9 14L15 6" />
                        </svg>
                    </span>
                    Я согласен на обработку персональных данных
                </label>
            </form>
            <div className="ml-[68px] h-24 border-l border-[#e8e8e8]" />
            <div className="ml-[68px]">
                <h2 className="text-[35px] leading-10 font-medium text-black">Будьте<span className="font-normal text-[#28b4e8]">V</span>месте</h2>
                <div className="mt-[18px] flex gap-3 text-white">
                    <a href="#" aria-label="Facebook" className="flex size-10 items-center justify-center rounded-full bg-linear-to-b from-[#33b0de] to-[#3f5de0]"><FaFacebookF className="size-[22px]" /></a>
                    <a href="#" aria-label="Instagram" className="flex size-10 items-center justify-center rounded-full bg-linear-to-b from-[#33b0de] to-[#3f5de0]"><Instagram className="size-7" /></a>
                    <a href="#" aria-label="VK" className="flex size-10 items-center justify-center rounded-full bg-linear-to-b from-[#33b0de] to-[#3f5de0]"><FaVk className="size-6" /></a>
                </div>
            </div>
        </div>
    </section>
)

const Gear = ({ className }: { className?: string }) => (
    <svg viewBox="0 0 16 16" className={className} fill="none" stroke="currentColor">
        <circle cx="8" cy="8" r="4" strokeWidth="3" />
        <circle cx="8" cy="8" r="6.500" strokeWidth="2" strokeDasharray="2.500 2.600" />
    </svg>
)

const Payments = () => (
    <div className="flex items-center text-white/65">
        <svg viewBox="0 0 20 20" className="size-[18px]" stroke="currentColor" strokeWidth="1.500">
            <path d="M10 0V6M10 14V20M0 10H5M15 10H20M3 3L7 7M13 13L17 17M17 3L13 7M3 17L7 13" />
        </svg>
        <span className="mr-5 ml-1 text-[9px] font-bold italic">webpay·</span>
        <span className="mr-[18px] text-[26px] leading-7 font-extrabold italic">VISA</span>
        <span className="mr-3.5 text-center text-[9px] leading-[10px]">Verified by<br /><b className="text-[14px] leading-3 italic">VISA</b></span>
        <span className="mr-3.5 text-center text-[6px] leading-[7px]">
            <svg viewBox="0 0 30 20" className="mx-auto h-5 w-[30px]" fill="currentColor">
                <circle cx="10" cy="10" r="9" opacity="0.600" />
                <circle cx="20" cy="10" r="9" />
            </svg>
            mastercard
        </span>
        <span className="mr-3.5 text-[12px] leading-3">Mastercard<br />SecureCode</span>
        <span className="mr-4 text-center text-[10px] leading-[10px] font-bold italic">
            <svg viewBox="0 0 34 14" className="mx-auto h-3.5 w-[34px]" fill="none" stroke="currentColor" strokeWidth="2">
                <path d="M2 13H10Q8 3 17 2Q26 3 26 13H34M12 13Q12 6 17 5Q22 6 22 13M17 13L21 6" />
            </svg>
            расчет
        </span>
        <span className="mr-4 text-center text-[5px] leading-[6px]">
            <Gear className="mx-auto size-[17px]" />
            БЕЛКАРТ
        </span>
        <span className="mr-1 flex size-[19px] items-center justify-center bg-white/65 text-[#4065de]"><Gear className="size-3.5" /></span>
        <span className="flex flex-col">
            <b className="text-[14px] leading-3.5">БЕЛКАРТ</b>
            <span className="text-[8px] leading-2.5 font-medium">ИнтернетПароль</span>
        </span>
    </div>
)

const Footer = () => (
    <footer className="relative bg-linear-to-b from-[#33b0de] to-[#3f5de0] pt-[45px] pb-[22px] text-[16px] leading-[22px] font-light text-white">
        <svg viewBox="0 0 1920 367" preserveAspectRatio="none" className="absolute inset-0 size-full" fill="#fff" fillOpacity="0.100">
            <path d="M79 0H172L321 367H229Z" />
            <path d="M666 0H759L608 367H516Z" />
            <path d="M1158 0V88L1820 367H1920V318Z" fillOpacity="0.080" />
        </svg>
        <div className="relative mx-auto max-w-[1600px] px-px">
            <div className="grid grid-cols-5 gap-[30px]">
                <div className="text-[15px]">
                    <h3 className="font-semibold">Телефоны</h3>
                    <ul className="mt-1.5">
                        <li className="flex h-12 items-center"><span className="w-[37px]"><A1Icon className="h-6 w-[25px]" /></span>+375 29 766-55-88</li>
                        <li className="flex h-12 items-center"><span className="w-[37px]"><EggIcon className="ml-0.5 h-[23px] w-[18px]" /></span>+375 33 766-55-88</li>
                        <li className="flex h-12 items-center"><span className="w-[37px]"><SmileIcon className="ml-1.5 h-[22px] w-3" /></span>+375 25 766-55-88</li>
                    </ul>
                </div>
                <div>
                    <h3 className="text-[15px] font-semibold">Время работы:</h3>
                    <dl className="mt-[19px] grid grid-cols-[58px_1fr]">
                        <dt>Пн–Чт</dt>
                        <dd>9:00–17:30</dd>
                        <dt>Пт</dt>
                        <dd>9:00–16:15</dd>
                    </dl>
                    <h3 className="mt-[19px] text-[15px] font-semibold">Адрес офиса:</h3>
                    <p className="mt-[7px]">223028 Минский р-н,<br />аг. Ждановичи, ул. Звездная,<br />19А-5</p>
                </div>
                <div>
                    <h3 className="text-[15px] font-semibold"><a href="#" className="border-b border-white">Оплата и доставка</a></h3>
                    <ul className="mt-3 leading-9">
                        {['Условия оплаты', 'Условия доставки', 'Обмен и возврат товара', 'Функция «Под заказ»', 'Доставка и оплата лекарств'].map((title) => (
                            <li key={title}><a href="#">{title}</a></li>
                        ))}
                    </ul>
                </div>
                <div>
                    <h3 className="text-[15px] font-semibold"><a href="#" className="border-b border-white">Компания</a></h3>
                    <ul className="mt-3 leading-9">
                        {['О компании', 'Новости', 'Бренды'].map((title) => (
                            <li key={title}><a href="#">{title}</a></li>
                        ))}
                    </ul>
                </div>
                <p>
                    РБ, 223028, Минская обл.,<br />Минский р-н, Ждановичский<br />с/с, аг. Ждановичи, ул.<br />Звездная, 19А-5, пом. 5-2
                    <br /><br />
                    УНП 800003702 Дата<br />регистрации сайта в<br />Торговом реестре<br />Республики Беларусь –<br />29.12.2015г
                </p>
            </div>
            <div className="mt-[51px] flex h-[30px] items-center">
                <span className="mr-8">2020 © kakvapteke.by</span>
                <Globe strokeWidth={1} className="mr-1.5 size-[15px]" />
                <a href="#">Разработка сайта – &nbsp;SLAM</a>
                <div className="ml-auto"><Payments /></div>
            </div>
        </div>
    </footer>
)

const App = () => (
    <div className="bg-white font-['Inter','Noto_Sans',sans-serif] [font-feature-settings:'cv11']">
        <Header />
        <main>
            <div className="mx-auto max-w-[1326px]">
                <div className="mt-[29px] flex items-center text-[12px] leading-4">
                    <a href="#" className="font-light text-[#777]">Главная</a>
                    <svg viewBox="0 0 10 8" className="mx-2 h-2 w-2.5 text-[#28b4e8]" fill="none" stroke="currentColor">
                        <path d="M0 4H9M6 1L9 4L6 7" />
                    </svg>
                    <span className="text-[#222]">Контакты</span>
                </div>
                <h1 className="mt-[29px] text-[35px] leading-10 font-medium text-black">Контакты</h1>
                <div className="mt-[26px] flex items-start justify-between">
                    <div className="w-[783px]">
                        <div className="flex bg-[#fafafa]">
                            <div className="flex w-[54px] items-center justify-center bg-[#33b0de] text-[42px] font-bold text-white">!</div>
                            <p className="px-5 py-5 text-[16px] leading-[22px] font-light text-[#33b0de]">
                                Заказы через сайт принимаются круглосуточно. При получении заказа менеджер<br />
                                свяжется с Вами и уточнит состав заказа, его стоимость, время и адрес доставки.
                                <br /><br />
                                Праздничные дни – согласно действующего законодательства.
                            </p>
                        </div>
                        <h2 className="mt-[29px] text-[25px] leading-8 font-medium text-black">Информация о владельце</h2>
                        <Owner />
                    </div>
                    <ContactForm />
                </div>
            </div>
            <div className="mt-[85px]">
                <CityMap />
            </div>
            <div className="mx-auto mt-[89px] mb-[88px] max-w-[1326px] text-[16px] leading-[22px] font-light text-[#333]">
                <SubTitle
                    icon={
                        <svg viewBox="0 0 18 20" className="ml-0.5 h-5 w-[18px]" fill="none" stroke="currentColor" strokeWidth="2">
                            <path d="M1 17V3Q1 1 3 1H17V19H3Q1 19 1 17Q1 15 3 15H17" />
                            <path d="M5 15V1M9 1V8L11.500 6L14 8V1" strokeWidth="1.500" />
                        </svg>
                    }
                >
                    Юридическая информация:
                </SubTitle>
                <p className="mt-[19px] ml-8">ИООО «Интерфармакс» УНП 800003702 ОКПО 37615469<br />Сайт зарегистрирова в Торговом реестре Республики Беларусь – 29.12.2015г</p>
                <h4 className="mt-[22px] ml-7 text-[15px] font-medium text-black">Юридический адрес:</h4>
                <p className="mt-0.5 ml-8">223028, Минский район, аг. Ждановичи, ул. Звездная, 19А-5</p>
            </div>
        </main>
        <Subscribe />
        <Footer />
    </div>
)

export default App
